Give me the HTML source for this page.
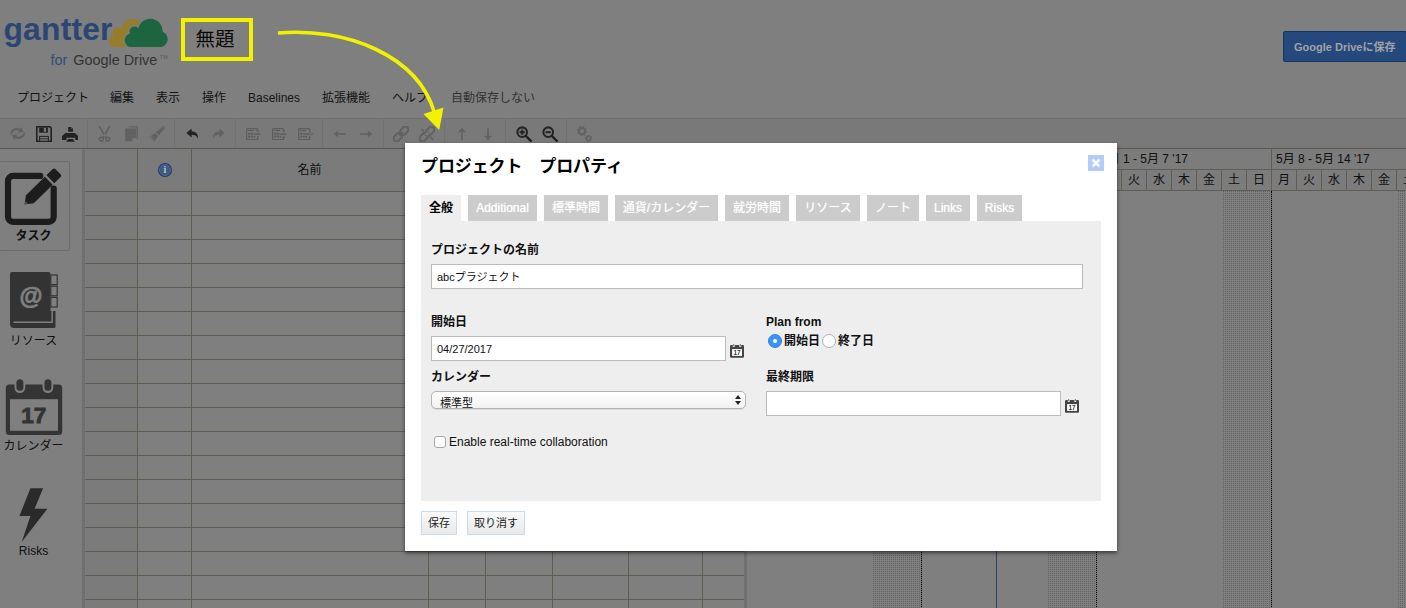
<!DOCTYPE html>
<html lang="ja">
<head>
<meta charset="utf-8">
<title>gantter</title>
<style>
*{box-sizing:border-box;margin:0;padding:0}
html,body{width:1406px;height:608px;overflow:hidden;background:#fff}
body{font-family:"Liberation Sans","Noto Sans CJK JP",sans-serif;font-size:12px;color:#222;position:relative}
.abs{position:absolute}
#app{position:absolute;left:0;top:0;width:1406px;height:608px;background:#fff;overflow:hidden}
#overlay{position:absolute;left:0;top:0;width:1406px;height:608px;background:rgba(0,0,0,.5)}
/* header */
.menu span{position:absolute;top:89px;line-height:18px;font-size:12px;color:#2a2a2a;white-space:nowrap}
#gdbtn{position:absolute;left:1283px;top:31px;width:124px;height:31px;background:#25487d;border:1px solid #113660;border-radius:2px;color:#a2a2a6;font-weight:bold;font-size:11px;line-height:31px;padding-left:10px;white-space:nowrap}
/* toolbar */
#toolbar{position:absolute;left:0;top:118px;width:1406px;height:31px;background:#f3f3f3;border-top:1px solid #dcdcdc;border-bottom:1px solid #b4b09c}
.sep{position:absolute;top:0;width:1px;height:29px;background:#e2e2e2}
/* sidebar */
#side{position:absolute;left:0;top:149px;width:85px;height:459px;background:#fefefe;border-right:3px solid #e0e0e0}
.slabel{position:absolute;left:0;width:67px;text-align:center;font-size:12px;line-height:14px;color:#222;white-space:nowrap}
/* grid */
#grid{position:absolute;left:85px;top:148px;width:659px;height:460px;background:#fff;border-top:1px solid #b4b09c}
.vl{position:absolute;top:0;width:1px;height:459px;background:#beb8a0}
.hl{position:absolute;left:0;width:660px;height:1px;background:#beb8a0}
/* gantt */
#gantt{position:absolute;left:744px;top:148px;width:662px;height:460px;background:#fff;border-top:1px solid #b4b09c}
.wk{position:absolute;top:0;height:21px;line-height:20px;font-size:12px;padding-left:4px;border-left:1px solid #c0bca8;border-bottom:1px solid #c0bca8;white-space:nowrap;color:#222}
.dy{position:absolute;top:21px;width:25px;height:21px;line-height:20px;font-size:12px;text-align:center;border-left:1px solid #c0bca8;border-bottom:1px solid #c0bca8;color:#222}
.wkend{position:absolute;top:42px;width:50px;height:420px;background-color:#fff;background-image:linear-gradient(90deg,#fff 1px,transparent 1px),linear-gradient(#c4c4c4 1px,#fff 1px);background-size:2px 2px}
.wline{position:absolute;top:42px;width:0;height:420px;border-left:1px dotted #000}
/* modal */
#modal{position:absolute;left:405px;top:143px;width:712px;height:408px;background:#fff;box-shadow:0 2px 4px rgba(0,0,0,.55)}
#mtitle{position:absolute;left:16px;top:12px;font-size:17px;font-weight:bold;line-height:24px;color:#000;white-space:nowrap;letter-spacing:-0.1px}
#close{position:absolute;left:683px;top:12px;width:16px;height:16px;background:#b4cdf6}
.tab{position:absolute;top:52px;height:26px;line-height:27px;background:#ccc;color:#fff;font-size:12px;text-align:center;white-space:nowrap;text-shadow:0 0 1px rgba(255,255,255,.8)}
.tab.on{background:#eee;color:#000;font-weight:bold;text-shadow:none}
#panel{position:absolute;left:16px;top:78px;width:680px;height:280px;background:#eee}
.lbl{position:absolute;font-weight:bold;font-size:12px;line-height:16px;color:#111;white-space:nowrap}
.inp{position:absolute;height:25px;background:#fff;border:1px solid #bcbcbc;font-size:11px;line-height:25px;padding-left:5px;color:#111;white-space:nowrap}
.btn{position:absolute;top:368px;height:24px;border:1px solid #c6dbf3;background:linear-gradient(#fafafa,#e9e9e9);font-size:11px;line-height:22px;text-align:center;color:#222;white-space:nowrap}
#sel{background:linear-gradient(#fff,#f1f1f1);border:1px solid #b3b3b3;border-radius:5px;font-size:11px;line-height:16px;padding:3px 0 0 8px;color:#111;overflow:hidden;box-shadow:0 1px 0 rgba(0,0,0,.08)}
#sel:after{content:"";position:absolute;right:4px;top:3px;width:0;height:0;border-left:3px solid transparent;border-right:3px solid transparent;border-bottom:4px solid #222}
#sel:before{content:"";position:absolute;right:4px;top:9px;width:0;height:0;border-left:3px solid transparent;border-right:3px solid transparent;border-top:4px solid #222}
#chk{width:12px;height:12px;background:#fff;border:1px solid #a8a8a8;border-radius:3px}
.radio{width:14px;height:14px;border-radius:50%;background:#fff;border:1px solid #b0b0b0}
.radio.on{background:#3b93f7;border:1px solid #2f82e6}
.radio.on:after{content:"";position:absolute;left:4px;top:4px;width:4px;height:4px;border-radius:50%;background:#fff}
</style>
</head>
<body>
<div id="app">
  <!-- LOGO -->
  <div id="logo" class="abs" style="left:0;top:0;width:180px;height:75px"></div>
  <div class="abs" style="left:195.500px;top:26px;font-size:19.500px;line-height:26px;color:#111">無題</div>
  <div class="menu">
    <span style="left:17px">プロジェクト</span>
    <span style="left:110px">編集</span>
    <span style="left:156px">表示</span>
    <span style="left:202px">操作</span>
    <span style="left:248px">Baselines</span>
    <span style="left:322px">拡張機能</span>
    <span style="left:392px">ヘルプ</span>
    <span style="left:451px;color:#666">自動保存しない</span>
  </div>
  <div id="toolbar"><div class="sep" style="left:87px"></div><div class="sep" style="left:174px"></div><div class="sep" style="left:235px"></div><div class="sep" style="left:322px"></div><div class="sep" style="left:383px"></div><div class="sep" style="left:444px"></div><div class="sep" style="left:505px"></div><div class="sep" style="left:566px"></div><svg class="abs" style="left:10px;top:7px" width="16" height="16" viewBox="0 0 16 16"><path d="M0.300 8.200C0.300 3.300 5.600 0.600 10.200 2.900L10.900 0.800L13.600 5.900L8 6.700L8.900 4.700C5.800 3.600 2.800 5 1.700 8.400Z" fill="#c2c2c2"/><path d="M0.300 8.200C0.300 3.300 5.600 0.600 10.200 2.900L10.900 0.800L13.600 5.900L8 6.700L8.900 4.700C5.800 3.600 2.800 5 1.700 8.400Z" fill="#c2c2c2" transform="rotate(180 7.700 7.500)"/></svg><svg class="abs" style="left:36px;top:7px" width="16" height="16" viewBox="0 0 16 16"><path d="M0.800 0.800h13.200l1.200 1.200v13.200h-14.400z" fill="#f3f3f3" stroke="#444" stroke-width="1.600"/><rect x="3.200" y="1.400" width="8.700" height="5.300" fill="#444"/><rect x="7.800" y="2" width="2.200" height="3.800" fill="#f3f3f3"/><rect x="3.600" y="10.400" width="8.800" height="4.800" fill="#f3f3f3" stroke="#444" stroke-width="1"/><path d="M3.600 12.800h8.800" stroke="#444" stroke-width=".9"/></svg><svg class="abs" style="left:62px;top:7px" width="16" height="16" viewBox="0 0 16 16"><path d="M6.200 0.900h3l1.800 1.800v3h-4.800z" fill="#444"/><path d="M9.100 1.200l1.600 1.600h-1.600z" fill="#ddd"/><path d="M3.500 7.100H12.900L16.100 9.900V13.900H13.300V11.700H4.500V13.900H0V9.900Z" fill="#444"/><path d="M6.200 13H11L12.800 15.800H4Z" fill="#444"/></svg><svg class="abs" style="left:97px;top:7px" width="14" height="16" viewBox="0 0 14 16"><path d="M1.200 0L3 0L9.900 11.400L8.100 12.400Z M13.700 0L11.900 0L5 11.400L6.800 12.400Z" fill="#c2c2c2"/><circle cx="4.300" cy="13.300" r="1.900" fill="none" stroke="#c2c2c2" stroke-width="1.700"/><circle cx="10.600" cy="13.300" r="1.900" fill="none" stroke="#c2c2c2" stroke-width="1.700"/></svg><svg class="abs" style="left:124px;top:7px" width="15" height="16" viewBox="0 0 15 16"><path d="M4.600 0.900H13.200V13.200" fill="none" stroke="#c2c2c2" stroke-width="1.400"/><path d="M1.200 2.500H12V11.500L7.500 15.600H1.200Z" fill="#c2c2c2"/><path d="M8 15V12H11.400Z" fill="#e6e6e6"/></svg><svg class="abs" style="left:149px;top:7px" width="16" height="16" viewBox="0 0 16 16"><path d="M14.600 1.600L9.800 6.400" stroke="#c2c2c2" stroke-width="3" stroke-linecap="round" fill="none"/><circle cx="14.500" cy="1.700" r=".7" fill="#f3f3f3"/><path d="M8.200 4.800L11.400 8L10 9.400L6.800 6.200Z" fill="#c2c2c2"/><path d="M6 7L9.200 10.200L5 15.800L4 14.800L5.200 13.200L4.400 12.400L2.800 14L1.800 13L3.400 11.400L2.600 10.600L0.800 12L0 11.200Z" fill="#c2c2c2"/></svg><svg class="abs" style="left:186px;top:9px" width="13" height="12" viewBox="0 0 13 12"><path d="M5.600 0.600v2.800c4.600 0 6.600 2.400 6.400 7.600-1-3-2.800-4.200-6.400-4.200v2.800l-5.200-4.500z" fill="#444"/></svg><svg class="abs" style="left:212px;top:9px" width="13" height="12" viewBox="0 0 13 12"><path d="M7.400 0.600v2.800c-4.600 0-6.600 2.400-6.400 7.600 1-3 2.800-4.200 6.400-4.200v2.800l5.200-4.500z" fill="#c2c2c2"/></svg><svg class="abs" style="left:246px;top:9px" width="16" height="12" viewBox="0 0 16 12"><rect x=".600" y=".600" width="11.200" height="11.200" rx="1.600" fill="none" stroke="#bcbcbc" stroke-width="1.400"/><path d="M2.200 2.500H8" stroke="#b8b8b8" stroke-width="1.100"/><rect x="2.2" y="4.7" width="1.900" height="2.100" fill="#b8b8b8"/><rect x="4.8" y="4.7" width="1.900" height="2.100" fill="#b8b8b8"/><rect x="7.4" y="4.7" width="1.900" height="2.100" fill="#b8b8b8"/><rect x="2.2" y="7.6" width="1.900" height="2.100" fill="#b8b8b8"/><rect x="4.8" y="7.6" width="1.900" height="2.100" fill="#b8b8b8"/><rect x="7.4" y="7.6" width="1.900" height="2.100" fill="#b8b8b8"/><rect x="7.600" y="4.200" width="5.400" height="3.800" fill="#f3f3f3"/><rect x="8.200" y="5.200" width="6" height="1.900" fill="#c2c2c2"/><path d="M9.600 2.300h3.400l-1.700 1.800z" fill="#c2c2c2"/></svg><svg class="abs" style="left:272px;top:9px" width="16" height="12" viewBox="0 0 16 12"><rect x=".600" y=".600" width="11.200" height="11.200" rx="1.600" fill="none" stroke="#bcbcbc" stroke-width="1.400"/><path d="M2.200 2.500H8" stroke="#b8b8b8" stroke-width="1.100"/><rect x="2.2" y="4.7" width="1.900" height="2.100" fill="#b8b8b8"/><rect x="4.8" y="4.7" width="1.900" height="2.100" fill="#b8b8b8"/><rect x="7.4" y="4.7" width="1.900" height="2.100" fill="#b8b8b8"/><rect x="2.2" y="7.6" width="1.900" height="2.100" fill="#b8b8b8"/><rect x="4.8" y="7.6" width="1.900" height="2.100" fill="#b8b8b8"/><rect x="7.4" y="7.6" width="1.900" height="2.100" fill="#b8b8b8"/><rect x="7.600" y="4.200" width="5.400" height="3.800" fill="#f3f3f3"/><rect x="8.200" y="5.200" width="6" height="1.900" fill="#c2c2c2"/><path d="M9.600 9.900h3.400l-1.700-1.800z" fill="#c2c2c2"/></svg><svg class="abs" style="left:298px;top:9px" width="16" height="12" viewBox="0 0 16 12"><rect x=".600" y=".600" width="11.200" height="11.200" rx="1.600" fill="none" stroke="#bcbcbc" stroke-width="1.400"/><path d="M2.200 2.500H8" stroke="#b8b8b8" stroke-width="1.100"/><rect x="2.2" y="4.7" width="1.900" height="2.100" fill="#b8b8b8"/><rect x="4.8" y="4.7" width="1.900" height="2.100" fill="#b8b8b8"/><rect x="7.4" y="4.7" width="1.900" height="2.100" fill="#b8b8b8"/><rect x="2.2" y="7.6" width="1.900" height="2.100" fill="#b8b8b8"/><rect x="4.8" y="7.6" width="1.900" height="2.100" fill="#b8b8b8"/><rect x="7.4" y="7.6" width="1.900" height="2.100" fill="#b8b8b8"/><rect x="5.600" y="4.200" width="7.400" height="3.800" fill="#f3f3f3"/><rect x="6.200" y="5.200" width="6.400" height="1.900" fill="#c2c2c2"/><path d="M13.300 4.100l1.900 2-1.900 2z" fill="#c2c2c2"/></svg><svg class="abs" style="left:333px;top:9px" width="14" height="12" viewBox="0 0 14 12"><path d="M13 6h-11" stroke="#c2c2c2" stroke-width="1.600" fill="none"/><path d="M0.600 6l4.600-3.600v7.200z" fill="#c2c2c2"/></svg><svg class="abs" style="left:359px;top:9px" width="14" height="12" viewBox="0 0 14 12"><path d="M1 6h11" stroke="#c2c2c2" stroke-width="1.600" fill="none"/><path d="M13.400 6l-4.600-3.600v7.200z" fill="#c2c2c2"/></svg><svg class="abs" style="left:393px;top:7px" width="16" height="16" viewBox="0 0 16 16"><g transform="rotate(-45 8 8)" fill="none" stroke="#c2c2c2" stroke-width="2.100"><rect x="-1.200" y="5" width="9.400" height="6" rx="3"/><rect x="7.800" y="5" width="9.400" height="6" rx="3"/><path d="M5.500 8h5" stroke-width="2.400"/></g></svg><svg class="abs" style="left:419px;top:7px" width="16" height="16" viewBox="0 0 16 16"><g transform="rotate(-45 8 8)" fill="none" stroke="#c2c2c2" stroke-width="2.100"><rect x="-1.200" y="5" width="9.400" height="6" rx="3"/><rect x="7.800" y="5" width="9.400" height="6" rx="3"/><path d="M5.500 8h5" stroke-width="2.400"/></g><path d="M2.600 3l2.400 2.400M11 10.600l3.400 3.400" stroke="#c2c2c2" stroke-width="1.600"/><circle cx="8" cy="8" r="1.800" fill="#f4f4f4"/></svg><svg class="abs" style="left:456px;top:8px" width="12" height="14" viewBox="0 0 12 14"><path d="M6 13v-10" stroke="#c2c2c2" stroke-width="1.600"/><path d="M6 0.600l3.800 4.600h-7.600z" fill="#c2c2c2"/></svg><svg class="abs" style="left:482px;top:8px" width="12" height="14" viewBox="0 0 12 14"><path d="M6 1v10" stroke="#c2c2c2" stroke-width="1.600"/><path d="M6 13.400l3.800-4.600h-7.600z" fill="#c2c2c2"/></svg><svg class="abs" style="left:516px;top:7px" width="16" height="16" viewBox="0 0 16 16"><circle cx="6.200" cy="6.200" r="4.800" fill="none" stroke="#444" stroke-width="2.100"/><path d="M9.800 9.800l5 5" stroke="#444" stroke-width="2.400" stroke-linecap="round"/><path d="M3.600 6.200h5.200" stroke="#444" stroke-width="2"/><path d="M6.200 3.600v5.200" stroke="#444" stroke-width="2"/></svg><svg class="abs" style="left:542px;top:7px" width="16" height="16" viewBox="0 0 16 16"><circle cx="6.200" cy="6.200" r="4.800" fill="none" stroke="#444" stroke-width="2.100"/><path d="M9.800 9.800l5 5" stroke="#444" stroke-width="2.400" stroke-linecap="round"/><path d="M3.600 6.200h5.200" stroke="#444" stroke-width="2"/></svg><svg class="abs" style="left:577px;top:7px" width="16" height="17" viewBox="0 0 16 17"><circle cx="5" cy="5" r="3" fill="none" stroke="#c2c2c2" stroke-width="2"/><circle cx="5" cy="5" r="4.400" fill="none" stroke="#c2c2c2" stroke-width="1.400" stroke-dasharray="1.700 1.750"/><circle cx="11.600" cy="12.400" r="2" fill="none" stroke="#c2c2c2" stroke-width="1.300"/><circle cx="11.600" cy="12.400" r="3.100" fill="none" stroke="#c2c2c2" stroke-width="1.100" stroke-dasharray="1.200 1.230"/></svg></div>
  <div id="side"><div class="abs" style="left:-1px;top:12px;width:71px;height:90px;background:#fff;border:1px solid #dadada;border-radius:2px"></div><svg class="abs" style="left:0;top:16px" width="66" height="64" viewBox="0 165 66 64"><path d="M40.300 175.900H13a5 5 0 0 0-5 5v35.900a5 5 0 0 0 5 5h35.700a5 5 0 0 0 5-5V188.700" fill="none" stroke="#3a3a3a" stroke-width="6.200" stroke-linecap="round"/><g transform="translate(24.500,204.600) rotate(-44.400)" fill="#3a3a3a"><path d="M0 0l7.500-5.600h26.500v11.200h-26.500z"/><path d="M36.200 -5.600h8.800a2 2 0 0 1 2 2v7.200a2 2 0 0 1-2 2h-8.800z"/></g><path d="M24.500 204.600l3.600-0.800-2.600-2.800z" fill="#fff" opacity=".5"/></svg><div class="slabel" style="top:80px;font-weight:bold">タスク</div><svg class="abs" style="left:8px;top:121px" width="52" height="60" viewBox="8 270 52 60"><path d="M12 272h36.500a2 2 0 0 1 2 2v37h5v15.500a1.500 1.500 0 0 1-1.500 1.500H14a4 4 0 0 1-4-4V274a2 2 0 0 1 2-2z" fill="#666"/><path d="M13.500 322.300h38.700v-11.300" fill="none" stroke="#fff" stroke-width="1.400"/><rect x="50.800" y="275" width="6.400" height="9.600" fill="#fff" stroke="#666" stroke-width="1.200"/><rect x="50.800" y="286.200" width="6.400" height="9.600" fill="#fff" stroke="#666" stroke-width="1.200"/><rect x="50.800" y="297.400" width="6.400" height="9.600" fill="#fff" stroke="#666" stroke-width="1.200"/><text x="31" y="303.500" font-size="23.500" font-weight="bold" fill="#fff" stroke="#fff" stroke-width=".7" text-anchor="middle" font-family="Liberation Sans, sans-serif">@</text></svg><div class="slabel" style="top:185px">リソース</div><svg class="abs" style="left:4px;top:227px" width="60" height="62" viewBox="4 376 60 62"><rect x="5.800" y="384.500" width="56.400" height="50.500" rx="3.500" fill="#686868"/><rect x="10" y="399.200" width="48" height="31.600" fill="#fff"/><rect x="14.500" y="379.200" width="10.800" height="13.800" rx="5.400" fill="#fff"/><rect x="42.500" y="379.200" width="10.800" height="13.800" rx="5.400" fill="#fff"/><rect x="16.400" y="379.200" width="7" height="11.600" rx="3.500" fill="#686868"/><rect x="44.400" y="379.200" width="7" height="11.600" rx="3.500" fill="#686868"/><text x="33.800" y="423" font-size="22.500" font-weight="bold" fill="#686868" stroke="#686868" stroke-width=".9" text-anchor="middle" font-family="Liberation Sans, sans-serif">17</text></svg><div class="slabel" style="top:290px">カレンダー</div><svg class="abs" style="left:15px;top:336px" width="40" height="60" viewBox="15 485 40 60"><path d="M30.400 488.200h12.700l-8.500 20.500h12.800L21.700 542.100l8.700-26H19.400z" fill="#555"/></svg><div class="slabel" style="top:395px">Risks</div></div>
  <div id="grid"><div class="abs" style="left:0;top:0;width:659px;height:42px;background:#f6f6f6"></div><div class="abs" style="left:0;top:0;width:52px;height:460px;background:#f6f6f6"></div><div class="vl" style="left:52px"></div><div class="vl" style="left:106px"></div><div class="vl" style="left:343px"></div><div class="vl" style="left:400px"></div><div class="vl" style="left:467px"></div><div class="vl" style="left:543px"></div><div class="vl" style="left:617px"></div><div class="hl" style="top:42px"></div><div class="hl" style="top:66px"></div><div class="hl" style="top:90px"></div><div class="hl" style="top:114px"></div><div class="hl" style="top:138px"></div><div class="hl" style="top:162px"></div><div class="hl" style="top:186px"></div><div class="hl" style="top:210px"></div><div class="hl" style="top:234px"></div><div class="hl" style="top:258px"></div><div class="hl" style="top:282px"></div><div class="hl" style="top:306px"></div><div class="hl" style="top:330px"></div><div class="hl" style="top:354px"></div><div class="hl" style="top:378px"></div><div class="hl" style="top:402px"></div><div class="hl" style="top:426px"></div><div class="hl" style="top:450px"></div><div class="abs" style="left:106px;top:12px;width:237px;text-align:center;font-size:12px;line-height:18px;color:#222">名前</div></div>
  <div id="gantt"><div class="abs" style="left:0;top:0;width:662px;height:42px;background:#f8f8f8;border-bottom:1px solid #c0bca8"></div><div class="wk" style="left:2px;width:175px">4月 17 - 4月 23 '17</div><div class="wk" style="left:177px;width:175px">4月 24 - 4月 30 '17</div><div class="wk" style="left:352px;width:175px">5月 1 - 5月 7 '17</div><div class="wk" style="left:527px;width:175px">5月 8 - 5月 14 '17</div><div class="dy" style="left:2px">月</div><div class="dy" style="left:27px">火</div><div class="dy" style="left:52px">水</div><div class="dy" style="left:77px">木</div><div class="dy" style="left:102px">金</div><div class="dy" style="left:127px">土</div><div class="dy" style="left:152px">日</div><div class="dy" style="left:177px">月</div><div class="dy" style="left:202px">火</div><div class="dy" style="left:227px">水</div><div class="dy" style="left:252px">木</div><div class="dy" style="left:277px">金</div><div class="dy" style="left:302px">土</div><div class="dy" style="left:327px">日</div><div class="dy" style="left:352px">月</div><div class="dy" style="left:377px">火</div><div class="dy" style="left:402px">水</div><div class="dy" style="left:427px">木</div><div class="dy" style="left:452px">金</div><div class="dy" style="left:477px">土</div><div class="dy" style="left:502px">日</div><div class="dy" style="left:527px">月</div><div class="dy" style="left:552px">火</div><div class="dy" style="left:577px">水</div><div class="dy" style="left:602px">木</div><div class="dy" style="left:627px">金</div><div class="dy" style="left:652px">土</div><div class="wkend" style="left:128px"></div><div class="wkend" style="left:303px"></div><div class="wkend" style="left:478px"></div><div class="wkend" style="left:653px"></div><div class="wline" style="left:177px"></div><div class="wline" style="left:352px"></div><div class="wline" style="left:527px"></div><div class="abs" style="left:252px;top:43px;width:1px;height:420px;background:#5b84c4"></div><div class="abs" style="left:0;top:0;width:3px;height:459px;background:#dedede"></div></div>
</div>
<div id="overlay"></div>
<!-- annotations -->
<div class="abs" style="left:181px;top:18px;width:72px;height:43px;border:4px solid #f2f200"></div>
<svg class="abs" style="left:260px;top:10px" width="220" height="150" viewBox="260 10 220 150">
  <path d="M278 33 C 345 27, 418 55, 434.500 113" fill="none" stroke="#f2f200" stroke-width="3.600"/>
  <path d="M423.500 114 L443.500 107.500 L439.200 130 Z" fill="#f2f200"/>
</svg>
<div class="abs" id="logo2" style="left:0;top:0;width:180px;height:75px">
<div class="abs" style="left:3.500px;top:10.700px;font-size:31.800px;line-height:36px;font-weight:bold;color:#2b4673;letter-spacing:0.200px;white-space:nowrap">gantter</div>
<svg class="abs" style="left:105px;top:14px" width="68" height="33.200" viewBox="105 14 68 33.200">
<g fill="#957d2b"><circle cx="114.800" cy="41.200" r="6"/><circle cx="117.600" cy="32.400" r="5"/><circle cx="133" cy="31" r="12"/><rect x="114.800" y="33" width="22" height="14.200"/></g>
<g fill="#7f7f7f"><circle cx="131.800" cy="40.200" r="8.400"/><circle cx="134.500" cy="31.500" r="6.400"/><circle cx="150.300" cy="31" r="13.600"/><circle cx="159.700" cy="39.200" r="9.400"/><rect x="131.800" y="33" width="28" height="15.600"/></g>
<g fill="#1c6540"><circle cx="131.800" cy="40.200" r="7"/><circle cx="134.500" cy="31.500" r="5"/><circle cx="150.300" cy="31" r="12.200"/><circle cx="159.700" cy="39.200" r="8"/><rect x="131.800" y="33" width="28" height="14.200"/></g>
</svg>
<div class="abs" style="left:50.500px;top:51.200px;font-size:14.400px;line-height:18px;white-space:nowrap;color:#333"><span style="color:#2f4c7c">for</span><span style="margin-left:6px">Google Drive</span><span style="font-size:5.500px;position:relative;top:-6.500px;left:2.500px;color:#5a5a5a">TM</span></div>
</div>
<svg class="abs" style="left:157px;top:162px" width="16" height="16" viewBox="0 0 16 16"><circle cx="8" cy="8" r="7" fill="#1a3768"/><circle cx="8" cy="8" r="5.600" fill="#3c5a82" stroke="#5b7699" stroke-width=".7"/><text x="8" y="11.300" font-size="10" font-weight="bold" text-anchor="middle" fill="#c4c4c4" font-family="Liberation Serif, serif">i</text></svg>
<div id="gdbtn">Google Driveに保存</div>
<div id="modal">
  <div id="mtitle">プロジェクト　プロパティ</div>
  <div id="close"><svg width="16" height="16" viewBox="0 0 16 16"><path d="M4.6 4.6 L11.4 11.4 M11.4 4.6 L4.6 11.4" stroke="#fff" stroke-width="2.2" fill="none"/></svg></div>
  <div class="tab on" style="left:16px;width:40px">全般</div>
  <div class="tab" style="left:63px;width:69px">Additional</div>
  <div class="tab" style="left:139px;width:64px">標準時間</div>
  <div class="tab" style="left:210px;width:103px">通貨/カレンダー</div>
  <div class="tab" style="left:320px;width:64px">就労時間</div>
  <div class="tab" style="left:391px;width:64px">リソース</div>
  <div class="tab" style="left:462px;width:52px">ノート</div>
  <div class="tab" style="left:521px;width:44px">Links</div>
  <div class="tab" style="left:572px;width:45px">Risks</div>
  <div id="panel">
    <div class="lbl" style="left:10px;top:21px">プロジェクトの名前</div>
    <div class="inp" style="left:10px;top:43px;width:652px">abcプラジェクト</div>
    <div class="lbl" style="left:10px;top:93px">開始日</div>
    <div class="inp" style="left:10px;top:115px;width:295px">04/27/2017</div>
    <svg class="abs calico" style="left:309px;top:123px" width="14" height="14" viewBox="0 0 14 14"><rect x="0" y="1" width="14" height="12.800" rx="1.200" fill="#444"/><rect x="2.100" y="5.100" width="9.900" height="6.800" fill="#fff"/><rect x="2.800" y="0" width="1.900" height="3" fill="#eee"/><rect x="9.300" y="0" width="1.900" height="3" fill="#eee"/><rect x="3.400" y="0" width=".7" height="2.200" fill="#444"/><rect x="9.900" y="0" width=".7" height="2.200" fill="#444"/><text x="7.100" y="11.200" font-size="6.400" font-weight="bold" text-anchor="middle" fill="#333" font-family="Liberation Sans, sans-serif">17</text></svg>
    <div class="lbl" style="left:10px;top:148px">カレンダー</div>
    <div class="abs" id="sel" style="left:10px;top:170px;width:315px;height:18px">標準型</div>
    <div class="abs" id="chk" style="left:13px;top:215px"></div>
    <div class="abs" style="left:28px;top:213px;font-size:12px;line-height:16px;color:#111;white-space:nowrap">Enable real-time collaboration</div>
    <div class="lbl" style="left:345px;top:93px">Plan from</div>
    <div class="abs radio on" style="left:347px;top:113px"></div>
    <div class="lbl" style="left:363px;top:112px">開始日</div>
    <div class="abs radio" style="left:401px;top:113px"></div>
    <div class="lbl" style="left:417px;top:112px">終了日</div>
    <div class="lbl" style="left:345px;top:148px">最終期限</div>
    <div class="inp" style="left:345px;top:170px;width:295px"></div>
    <svg class="abs calico" style="left:644px;top:178px" width="14" height="14" viewBox="0 0 14 14"><rect x="0" y="1" width="14" height="12.800" rx="1.200" fill="#444"/><rect x="2.100" y="5.100" width="9.900" height="6.800" fill="#fff"/><rect x="2.800" y="0" width="1.900" height="3" fill="#eee"/><rect x="9.300" y="0" width="1.900" height="3" fill="#eee"/><rect x="3.400" y="0" width=".7" height="2.200" fill="#444"/><rect x="9.900" y="0" width=".7" height="2.200" fill="#444"/><text x="7.100" y="11.200" font-size="6.400" font-weight="bold" text-anchor="middle" fill="#333" font-family="Liberation Sans, sans-serif">17</text></svg>
  </div>
  <div class="btn" style="left:16px;width:36px">保存</div>
  <div class="btn" style="left:62px;width:58px">取り消す</div>
</div>
</body>
</html>
